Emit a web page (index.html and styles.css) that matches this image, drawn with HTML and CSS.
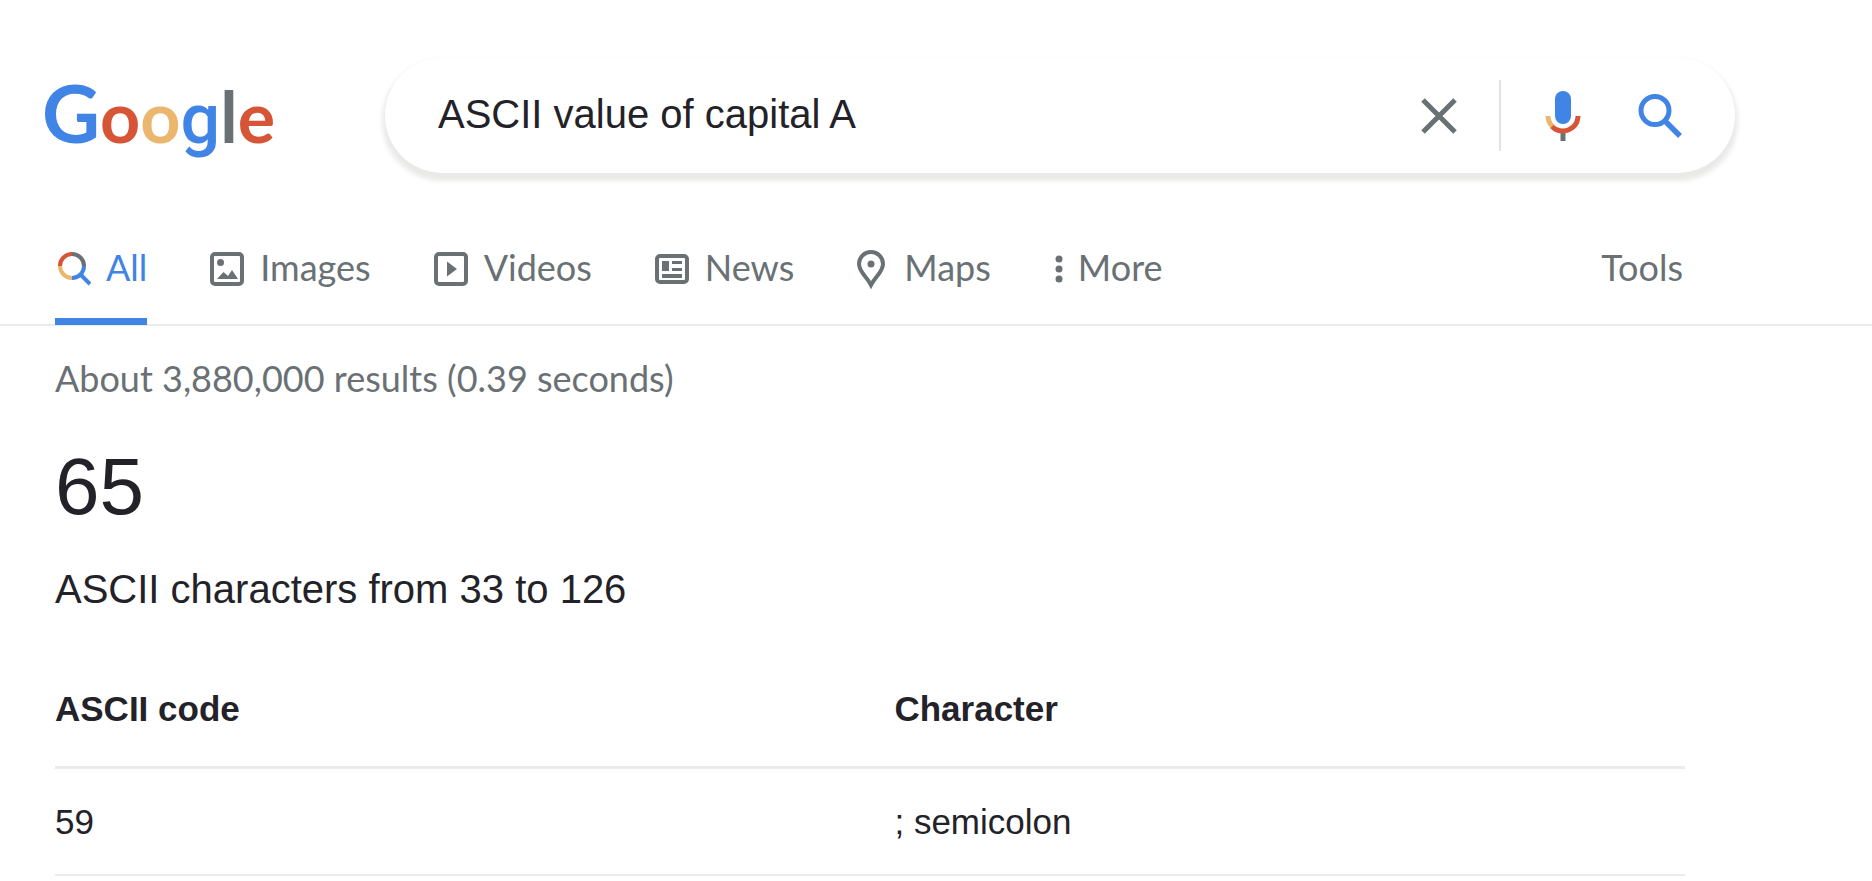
FILE: index.html
```html
<!DOCTYPE html>
<html lang="en">
<head>
<meta charset="utf-8">
<title>ASCII value of capital A - Google Search</title>
<link rel="stylesheet" href="styles.css">
</head>
<body>
<header class="header">
  <a class="logo" href="#" aria-label="Google"><span class="logo-cap blue">G</span><span class="red">o</span><span class="yellow">o</span><span class="logo-loop blue">g</span><span class="gray">l</span><span class="red">e</span></a>
  <form class="search" role="search">
    <input class="search-input" type="text" aria-label="Search" value="ASCII value of capital A">
    <button class="icon-button" type="reset" aria-label="Clear">
      <svg width="36" height="36" viewBox="0 0 36 36"><path d="M2 2 34 34M34 2 2 34" fill="none" stroke="#697175" stroke-width="5"/></svg>
    </button>
    <span class="divider"></span>
    <button class="icon-button mic" type="button" aria-label="Search by voice">
      <svg width="36" height="52" viewBox="0 0 36 52"><rect x="10" y="1" width="16" height="33" rx="8" fill="#4084e6"/><path d="M18 42v9" stroke="#697175" stroke-width="5"/><path d="M3 26a15 15 0 0 0 4.500 10.500" fill="none" stroke="#ebb66d" stroke-width="5"/><path d="M7 36.500C10 39.500 14 41 18 41a15 15 0 0 0 15-15" fill="none" stroke="#d65536" stroke-width="5"/></svg>
    </button>
    <button class="icon-button" type="submit" aria-label="Search">
      <svg width="46" height="46" viewBox="0 0 46 46"><circle cx="18" cy="17.500" r="14" fill="none" stroke="#4084e6" stroke-width="5"/><path d="m29 29 14 14" stroke="#4084e6" stroke-width="5.500"/></svg>
    </button>
  </form>
</header>

<nav class="tabs">
  <a class="tab active" href="#">
    <svg width="36" height="36" viewBox="0 0 36 36" fill="none" stroke-width="4"><path d="M5 15A12 12 0 0 1 17 3" stroke="#d65536"/><path d="M17 3a12 12 0 0 1 12 12" stroke="#697175"/><path d="M17 27A12 12 0 0 1 5 15" stroke="#ebb66d"/><path d="M29 15a12 12 0 0 1-12 12M25.500 23.500l9.500 9.500" stroke="#4084e6"/></svg>
    All</a>
  <a class="tab" href="#">
    <svg width="36" height="36" viewBox="0 0 36 36"><rect x="3" y="3" width="30" height="30" rx="3" fill="none" stroke="#697175" stroke-width="4"/><circle cx="11.500" cy="11.500" r="3.500" fill="#697175"/><path d="m8 28 6.500-7 4.500 4 4-6 6 9z" fill="#697175"/></svg>
    Images</a>
  <a class="tab" href="#">
    <svg width="36" height="36" viewBox="0 0 36 36"><rect x="3" y="3" width="30" height="30" rx="3" fill="none" stroke="#697175" stroke-width="4"/><path d="M14 10.500v15l10-7.500z" fill="#697175"/></svg>
    Videos</a>
  <a class="tab" href="#">
    <svg width="36" height="36" viewBox="0 0 36 36"><rect x="3" y="5" width="30" height="26" rx="3" fill="none" stroke="#697175" stroke-width="4"/><path d="M8 10h7v10H8zM18 10h10v3H18zM18 17h10v3H18zM8 23h20v4H8z" fill="#697175"/></svg>
    News</a>
  <a class="tab tab-wide" href="#">
    <svg width="30" height="40" viewBox="0 0 30 40"><path d="M15 3C8 3 3 8.500 3 15c0 8 8 13 12 21 4-8 12-13 12-21C27 8.500 22 3 15 3z" fill="none" stroke="#697175" stroke-width="4"/><circle cx="15" cy="15" r="3.500" fill="#697175"/></svg>
    Maps</a>
  <a class="tab" href="#">
    <svg width="8" height="36" viewBox="0 0 8 36" fill="#697175"><circle cx="4" cy="8" r="3.500"/><circle cx="4" cy="18" r="3.500"/><circle cx="4" cy="28" r="3.500"/></svg>
    More</a>
  <a class="tab tools" href="#">Tools</a>
</nav>

<main class="results">
  <p class="stats">About 3,880,000 results (0.39 seconds)</p>
  <h1 class="answer">65</h1>
  <h2 class="subtitle">ASCII characters from 33 to 126</h2>
  <table class="codes">
    <thead><tr><th scope="col">ASCII code</th><th scope="col">Character</th></tr></thead>
    <tbody><tr><td>59</td><td>; semicolon</td></tr></tbody>
  </table>
</main>
</body>
</html>
```
FILE: styles.css
```css
* { box-sizing: border-box; }
body { margin: 0; background: #fff; color: #232229; font-family: "Liberation Sans", Arial, sans-serif; }
a { color: inherit; text-decoration: none; }
svg { display: block; flex: none; }

.header { display: flex; align-items: center; padding: 58px 137px 0 42px; }
.logo { width: 343px; flex: none; font: 700 70px/88px Lato, sans-serif; }
.logo-cap { font-size: 80px; }
.logo-loop { font-family: Roboto, sans-serif; font-weight: 500; }
.blue { color: #4084e6; }
.red { color: #d65536; }
.yellow { color: #ebb66d; }
.gray { color: #697175; }

.search { flex: 1; display: flex; align-items: center; height: 115px; padding: 0 52px 0 53px; border-radius: 58px; box-shadow: 0 5px 5px 3px #e9e9e8; }
.search-input { flex: 1; min-width: 0; padding: 0 0 4px; border: 0; outline: 0; background: none; color: inherit; font: 40px/48px "Liberation Sans", Arial, sans-serif; }
.icon-button { padding: 0; border: 0; background: none; }
.divider { width: 2px; height: 71px; margin: 0 44px 0 42px; background: #dfe4e7; }
.mic { margin-right: 56px; }

.tabs { display: flex; gap: 62px; padding: 0 189px 0 55px; border-bottom: 2px solid #ebebea; color: #697175; }
.tab { display: flex; align-items: center; gap: 15px; height: 152px; margin-bottom: -1px; padding-top: 45px; padding-bottom: 2px; border-bottom: 7px solid transparent; font: 36px/44px Lato, sans-serif; }
.tab svg { margin-top: 4px; }
.active { color: #4084e6; border-color: #4084e6; }
.tab-wide { gap: 18px; margin-right: 2px; }
.tools { margin-left: auto; }

.results { padding: 0 187px 0 55px; }
.stats { margin: 30px 0 0; color: #697175; font: 36px/44px Lato, sans-serif; }
.answer { margin: 41px 0 0; font-size: 80px; line-height: 92px; font-weight: 400; }
.subtitle { margin: 32px 0 0; font-size: 40px; line-height: 48px; font-weight: 400; }
.codes { width: 100%; border-collapse: collapse; table-layout: fixed; font-size: 35px; line-height: 40px; text-align: left; }
.codes th { padding: 76px 0 37px; border-bottom: 3px solid #ebebea; }
.codes th:first-child { width: 51.5%; }
.codes td { padding: 33px 0 32px; border-bottom: 2px solid #ebebea; }
```
